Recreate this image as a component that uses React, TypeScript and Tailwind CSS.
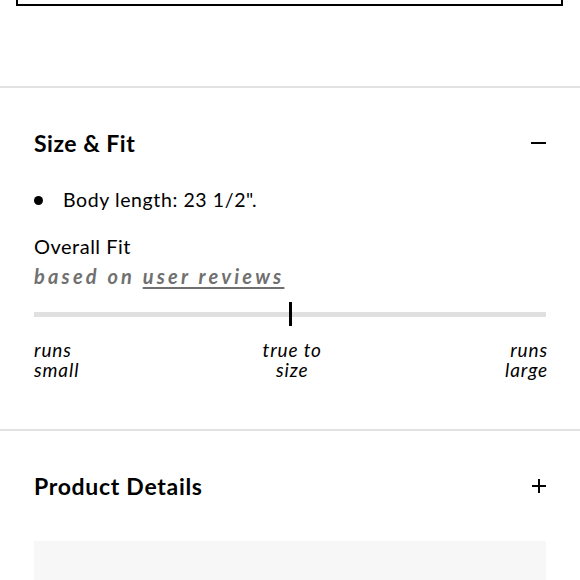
import React from "react";

const labels = [
  { top: "runs", bottom: "small", align: "text-left" },
  { top: "true to", bottom: "size", align: "text-center" },
  { top: "runs", bottom: "large", align: "text-right" },
];

const App = () => {
  return (
    <div className="w-[580px] h-[580px] overflow-hidden bg-white text-black font-['Lato',sans-serif]">
      <div className="ml-4 mr-[17px] h-[6px] border-x-2 border-b-2 border-black" />

      <div className="mt-[80px] border-t-2 border-[#e2e2e2]">
        <div className="px-[34px] pt-[40px] pb-[49px]">
          <div className="flex items-center justify-between h-[30px]">
            <h2 className="text-[23px] font-bold tracking-[0.5px]">Size &amp; Fit</h2>
            <span className="block w-[15px] h-[2px] bg-black" />
          </div>

          <ul className="mt-[29px]">
            <li className="flex items-center h-[26px]">
              <span className="w-[9px] h-[9px] rounded-full bg-black" />
              <span className="ml-[20px] text-[19.5px] tracking-[0.6px]">Body length: 23 1/2".</span>
            </li>
          </ul>

          <div className="mt-[20px] text-[20px] leading-[26px] tracking-[0.5px]">Overall Fit</div>
          <div className="mt-[4px] text-[20px] leading-[26px] font-bold italic text-[#707070] tracking-[3.2px]">
            based on <span className="underline underline-offset-[3px]">user reviews</span>
          </div>

          <div className="relative mt-[13px] h-[24px] flex items-center">
            <div className="w-full h-[5px] bg-[#e0e0e0]" />
            <div className="absolute left-1/2 -translate-x-[1px] top-0 w-[3px] h-[24px] bg-black" />
          </div>

          <div className="mt-[14px] -mr-[2px] flex justify-between text-[19px] italic leading-[20px] tracking-[0.9px]">
            {labels.map((l, idx) => (
              <p key={idx} className={l.align}>
                {l.top}
                <br />
                {l.bottom}
              </p>
            ))}
          </div>
        </div>
      </div>

      <div className="border-t-2 border-[#e2e2e2]">
        <div className="px-[34px] pt-[40px]">
          <div className="flex items-center justify-between h-[30px]">
            <h2 className="text-[23px] font-bold tracking-[0.7px]">Product Details</h2>
            <svg width="16" height="16" viewBox="0 0 16 16" className="-mr-[1px]">
              <path d="M8 1v14M1 8h14" stroke="black" strokeWidth="2" />
            </svg>
          </div>
          <div className="mt-[40px] h-[60px] bg-[#f7f7f7]" />
        </div>
      </div>
    </div>
  );
};

export default App;
